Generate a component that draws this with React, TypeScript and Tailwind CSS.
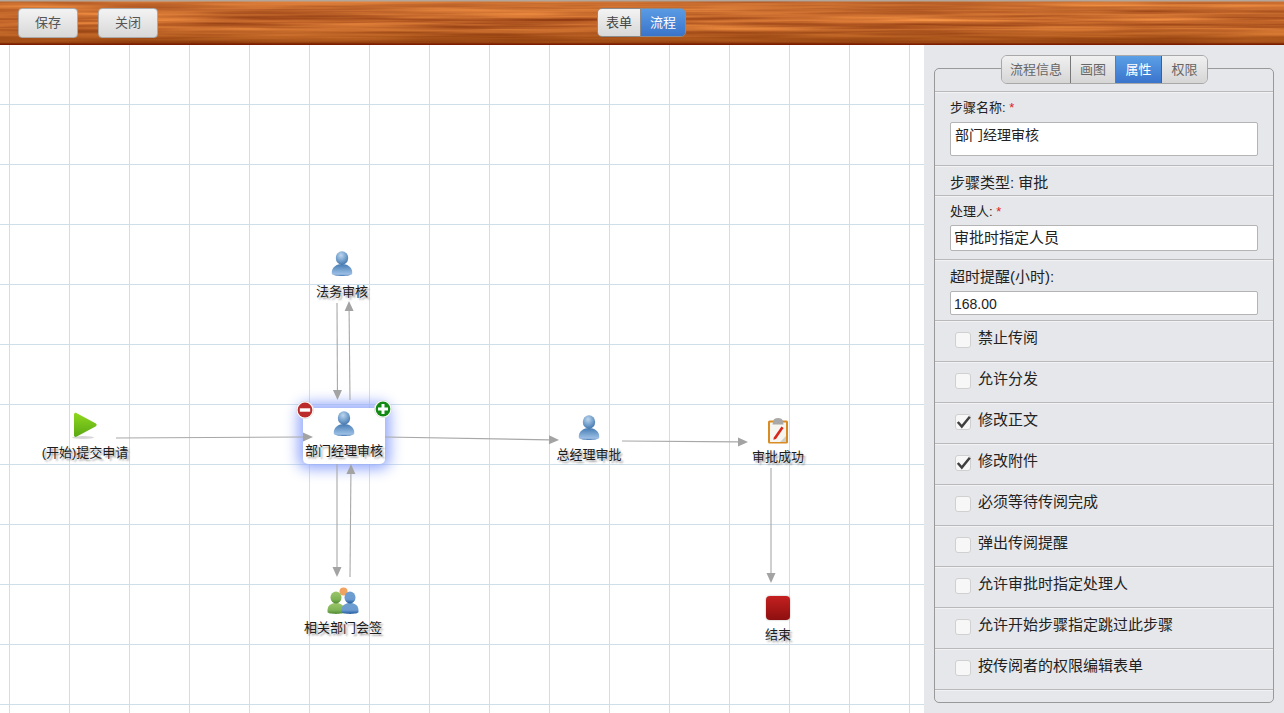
import React from "react";

const FONT = "font-['Liberation_Sans','Noto_Sans_CJK_SC',sans-serif]";

function Wood() {
  return (
    <svg className="absolute inset-0 h-full w-full" width="1284" height="45" aria-hidden="true">
      <defs>
        <filter id="wood" x="0" y="0" width="100%" height="100%" colorInterpolationFilters="sRGB">
          <feTurbulence type="fractalNoise" baseFrequency="0.005 0.22" numOctaves="3" seed="7" />
          <feColorMatrix
            type="matrix"
            values="0 0 0 0.7 0.42  0 0 0 0.6 0.1  0 0 0 0.35 -0.01  0 0 0 0 1"
          />
        </filter>
        <linearGradient id="woodShade" x1="0" y1="0" x2="0" y2="1">
          <stop offset="0" stopColor="#d87f3c" stopOpacity="0.5" />
          <stop offset="0.5" stopColor="#b9652a" stopOpacity="0.15" />
          <stop offset="0.85" stopColor="#a04e14" stopOpacity="0.6" />
          <stop offset="1" stopColor="#7a2a02" stopOpacity="0.9" />
        </linearGradient>
      </defs>
      <rect width="1284" height="45" filter="url(#wood)" />
      <rect width="1284" height="45" fill="url(#woodShade)" />
      <rect width="1284" height="1.5" fill="#b3a79c" />
      <rect y="43.5" width="1284" height="1.5" fill="#7c1c00" />
    </svg>
  );
}

function Person({ className = "" }: { className?: string }) {
  return (
    <svg className={className} width="22" height="26" viewBox="0 0 22 26" aria-hidden="true">
      <defs>
        <radialGradient id="pHead" cx="0.42" cy="0.3" r="0.75">
          <stop offset="0" stopColor="#bcd6ee" />
          <stop offset="0.6" stopColor="#6f9cc9" />
          <stop offset="1" stopColor="#3f72a8" />
        </radialGradient>
        <linearGradient id="pBody" x1="0" y1="0" x2="0" y2="1">
          <stop offset="0" stopColor="#447ab2" />
          <stop offset="0.55" stopColor="#7ea8d4" />
          <stop offset="0.85" stopColor="#9cbfe4" />
          <stop offset="1" stopColor="#3e70ac" />
        </linearGradient>
      </defs>
      <path d="M0.800 22.800C0 16.200 6 13 11 13C16 13 22 16.200 21.200 22.800C20 25.800 2 25.800 0.800 22.800Z" fill="url(#pBody)" />
      <ellipse cx="11" cy="7" rx="6.200" ry="6.700" fill="url(#pHead)" />
    </svg>
  );
}

function Play() {
  return (
    <svg width="26" height="28" viewBox="0 0 26 28" aria-hidden="true">
      <defs>
        <linearGradient id="playG" x1="0" y1="0" x2="0" y2="1">
          <stop offset="0" stopColor="#8fd81e" />
          <stop offset="1" stopColor="#5aa814" />
        </linearGradient>
      </defs>
      <ellipse cx="11" cy="25.500" rx="11" ry="1.500" fill="#bbbbbb" opacity="0.6" />
      <path d="M2 2.500C2 1 3.500 0.400 4.800 1.200L23.500 11.200C25 12 25 13.600 23.500 14.400L4.800 24.600C3.500 25.400 2 24.600 2 23.200Z" fill="url(#playG)" />
    </svg>
  );
}

function Clipboard() {
  return (
    <svg width="22" height="26" viewBox="0 0 22 26" aria-hidden="true">
      <rect x="1" y="2.500" width="20" height="23" rx="1.500" fill="#d98c24" />
      <rect x="3" y="4.500" width="16" height="19.500" fill="#f7f5ef" />
      <path d="M19 18L13 24L19 24Z" fill="#cfcfca" />
      <path d="M6.500 2C7 0.800 9 0 11 0C13 0 15 0.800 15.500 2L16.500 6.500L5.500 6.500Z" fill="#a8a8a8" />
      <path d="M6.800 19.500L14.500 8.500L16.600 10L9 21L6.400 21.800Z" fill="#d8261c" />
    </svg>
  );
}

function Stop() {
  return <div className="h-6 w-6 rounded-[4px] bg-gradient-to-b from-[#c4201f] to-[#8e0f10] shadow-[0_0_2px_rgba(0,0,0,0.35)]" />;
}

function Group() {
  const body = (c1: string, c2: string, c3: string, x: number, id: string) => (
    <g transform={`translate(${x} 4)`}>
      <defs>
        <linearGradient id={id} x1="0" y1="0" x2="0" y2="1">
          <stop offset="0" stopColor={c1} />
          <stop offset="0.65" stopColor={c2} />
          <stop offset="1" stopColor={c3} />
        </linearGradient>
      </defs>
      <path d="M0.500 21C0 14.500 4 12 9 12C14 12 18 14.500 17.500 21C17 23.500 1 23.500 0.500 21Z" fill={`url(#${id})`} />
      <ellipse cx="9" cy="6.500" rx="5.500" ry="6" fill={`url(#${id})`} />
    </g>
  );
  return (
    <svg width="33" height="28" viewBox="0 0 33 28" aria-hidden="true">
      <circle cx="16.500" cy="4.500" r="4" fill="#f0a460" />
      {body("#9cc66c", "#7fb356", "#4f8a32", 0, "gG")}
      {body("#6f9fd0", "#6c9bd0", "#1f5a9e", 14, "gB")}
    </svg>
  );
}

function Badge({ plus, className }: { plus?: boolean; className: string }) {
  return (
    <svg className={className} width="18" height="18" viewBox="0 0 18 18" aria-hidden="true">
      <circle cx="9" cy="9" r="8.700" fill="#ffffff" stroke="#d0d0d0" strokeWidth="0.500" />
      <circle cx="9" cy="9" r="7.400" fill={plus ? "#138a14" : "#bb2b2b"} />
      {plus ? (
        <path d="M7.500 4H10.500V7.500H14V10.500H10.500V14H7.500V10.500H4V7.500H7.500Z" fill="#ffffff" />
      ) : (
        <rect x="3.800" y="7.300" width="10.400" height="3.400" fill="#ffffff" />
      )}
    </svg>
  );
}

function Arrow({ x1, y1, x2, y2 }: { x1: number; y1: number; x2: number; y2: number }) {
  const a = Math.atan2(y2 - y1, x2 - x1);
  const len = 10;
  const w = 4.5;
  const bx = x2 - len * Math.cos(a);
  const by = y2 - len * Math.sin(a);
  const px = -Math.sin(a) * w;
  const py = Math.cos(a) * w;
  return (
    <g>
      <line x1={x1} y1={y1} x2={bx} y2={by} stroke="#a8a8a8" strokeWidth="1.100" />
      <polygon points={`${x2},${y2} ${bx + px},${by + py} ${bx - px},${by - py}`} fill="#a3a3a3" />
    </g>
  );
}

function Label({ children }: { children: React.ReactNode }) {
  return (
    <span className="whitespace-nowrap text-[13px] leading-[16px] text-[#1c1c1c] [text-shadow:2px_2px_2px_rgba(0,0,0,0.38)]">
      {children}
    </span>
  );
}

function Canvas() {
  return (
    <div className="relative h-full w-[924px] shrink-0 overflow-hidden bg-white bg-[linear-gradient(to_right,#cfdfea_1px,transparent_1px),linear-gradient(to_bottom,#cfdfea_1px,transparent_1px)] bg-[size:60px_60px] bg-[position:9px_-1px]">
      <div className="absolute left-[303px] top-[363px] h-[56px] w-[82px] rounded-[5px] bg-white shadow-[0_0_14px_5px_#94a9fb]" />
      <svg className="absolute left-0 top-0" width="924" height="668" viewBox="0 45 924 668" aria-hidden="true">
        <Arrow x1={116} y1={438} x2={313} y2={437} />
        <Arrow x1={337} y1={303} x2={337.500} y2={400} />
        <Arrow x1={350} y1={400} x2={349} y2={301} />
        <Arrow x1={385} y1={437} x2={559} y2={440} />
        <Arrow x1={622} y1={441} x2={748} y2={442} />
        <Arrow x1={771} y1={468} x2={771} y2={583} />
        <Arrow x1={337} y1={464} x2={337} y2={577} />
        <Arrow x1={350} y1={577} x2={351} y2={464} />
      </svg>

      <div className="absolute left-[292px] top-[206px] flex w-[100px] flex-col items-center gap-[7px]">
        <Person />
        <Label>法务审核</Label>
      </div>
      <div className="absolute left-[294px] top-[366px] flex w-[100px] flex-col items-center gap-[6px]">
        <Person />
        <Label>部门经理审核</Label>
      </div>
      <Badge className="absolute left-[296px] top-[356px]" />
      <Badge plus className="absolute left-[374px] top-[355px]" />
      <div className="absolute left-[35px] top-[367px] flex w-[100px] flex-col items-center gap-[5px]">
        <Play />
        <Label>(开始)提交申请</Label>
      </div>
      <div className="absolute left-[539px] top-[370px] flex w-[100px] flex-col items-center gap-[6px]">
        <Person />
        <Label>总经理审批</Label>
      </div>
      <div className="absolute left-[728px] top-[373px] flex w-[100px] flex-col items-center gap-[5px]">
        <Clipboard />
        <Label>审批成功</Label>
      </div>
      <div className="absolute left-[293px] top-[542px] flex w-[100px] flex-col items-center gap-[5px]">
        <Group />
        <Label>相关部门会签</Label>
      </div>
      <div className="absolute left-[728px] top-[551px] flex w-[100px] flex-col items-center gap-[7px]">
        <Stop />
        <Label>结束</Label>
      </div>
    </div>
  );
}

function Check({ label, checked }: { label: string; checked?: boolean }) {
  return (
    <div className="flex h-[41px] items-start border-b border-[#b9b9bb] pl-[20px] pt-[7px] shadow-[0_1px_0_#f2f2f4]">
      <div className="relative mt-[4px] h-4 w-4 shrink-0 rounded-[3px] border border-[#d0d0d0] bg-[#f7f7f7]">
        {checked && (
          <svg className="absolute left-0 top-[-1px]" width="16" height="16" viewBox="0 0 16 16" aria-hidden="true">
            <path d="M1.800 8L5.800 12.500L13.800 2.800" fill="none" stroke="#3f3f3f" strokeWidth="2.500" />
          </svg>
        )}
      </div>
      <span className="ml-[7px] text-[15px] leading-[20px] text-[#222]">{label}</span>
    </div>
  );
}

const TABS = [
  { t: "流程信息", w: "w-[69px]" },
  { t: "画图", w: "w-[45px]" },
  { t: "属性", w: "w-[46px]", active: true },
  { t: "权限", w: "w-[45px]" },
];

function Panel() {
  const rowCls = "border-b border-[#b9b9bb] px-[15px] shadow-[0_1px_0_#f2f2f4]";
  const inputCls = "rounded-[2px] border border-[#b4b4b4] bg-white text-[#222]";
  return (
    <div className="h-full flex-1 bg-[#e6e7ea] pl-[10px] pr-[10px] pt-[23px]">
      <div className="h-[635px] rounded-[5px] border border-[#999]">
        <div className="-mt-[14px] flex justify-end pr-[65px]">
          <div className="flex h-[29px] overflow-hidden rounded-[6px] border border-[#a8a8a8]">
            {TABS.map((tab, i) => (
              <div
                key={tab.t}
                className={`${tab.w} flex items-center justify-center text-[13px] ${
                  tab.active
                    ? "bg-gradient-to-b from-[#5ba0e6] to-[#3a74cc] text-white"
                    : "bg-gradient-to-b from-[#f0f0f0] to-[#d6d6d6] text-[#666]"
                } ${i < 2 ? "border-r border-[#777]" : ""} ${tab.active ? "border-r border-[#2f62a8]" : ""}`}
              >
                {tab.t}
              </div>
            ))}
          </div>
        </div>
        <div className="h-[8px] border-b border-[#b9b9bb] shadow-[0_1px_0_#f2f2f4]" />
        <div className={`h-[74px] pt-[7px] ${rowCls}`}>
          <div className="text-[13px] leading-[18px] text-[#222]">
            步骤名称: <span className="text-[#e02020]">*</span>
          </div>
          <div className={`mt-[5px] h-[34px] pl-[4px] text-[14px] leading-[24px] ${inputCls}`}>部门经理审核</div>
        </div>
        <div className={`h-[30px] pt-[7px] text-[15px] leading-[20px] text-[#222] ${rowCls}`}>步骤类型: 审批</div>
        <div className={`h-[64px] pt-[7px] ${rowCls}`}>
          <div className="text-[13px] leading-[18px] text-[#222]">
            处理人: <span className="text-[#e02020]">*</span>
          </div>
          <div className={`mt-[4px] h-[26px] pl-[3px] text-[15px] leading-[24px] ${inputCls}`}>审批时指定人员</div>
        </div>
        <div className={`h-[61px] pt-[7px] ${rowCls}`}>
          <div className="text-[15px] leading-[20px] text-[#222]">超时提醒(小时):</div>
          <div className={`mt-[4px] h-[24px] pl-[3px] text-[14px] leading-[24px] ${inputCls}`}>168.00</div>
        </div>
        <Check label="禁止传阅" />
        <Check label="允许分发" />
        <Check label="修改正文" checked />
        <Check label="修改附件" checked />
        <Check label="必须等待传阅完成" />
        <Check label="弹出传阅提醒" />
        <Check label="允许审批时指定处理人" />
        <Check label="允许开始步骤指定跳过此步骤" />
        <Check label="按传阅者的权限编辑表单" />
      </div>
    </div>
  );
}

function Btn({ children }: { children: React.ReactNode }) {
  return (
    <div className="flex h-[30px] w-[60px] items-center justify-center rounded-[4px] border border-[#a9a9a9] bg-gradient-to-b from-[#f3f3f3] to-[#d8d8d8] text-[13px] text-[#555]">
      {children}
    </div>
  );
}

export default function App() {
  return (
    <div className={`flex h-[713px] w-[1284px] flex-col overflow-hidden ${FONT}`}>
      <div className="relative h-[45px] shrink-0">
        <Wood />
        <div className="relative flex h-full items-start pt-[8px]">
          <div className="ml-[18px] flex gap-[20px]">
            <Btn>保存</Btn>
            <Btn>关闭</Btn>
          </div>
          <div className="ml-[439px] flex h-[29px] overflow-hidden rounded-[5px] border border-[#8b8b8b]">
            <div className="flex w-[43px] items-center justify-center border-r border-[#8a8a8a] bg-gradient-to-b from-[#f3f3f3] to-[#d8d8d8] text-[13px] text-[#444]">
              表单
            </div>
            <div className="flex w-[44px] items-center justify-center bg-gradient-to-b from-[#5a9be4] to-[#3a74ca] text-[13px] text-white">
              流程
            </div>
          </div>
        </div>
      </div>
      <div className="flex h-[668px]">
        <Canvas />
        <Panel />
      </div>
    </div>
  );
}
